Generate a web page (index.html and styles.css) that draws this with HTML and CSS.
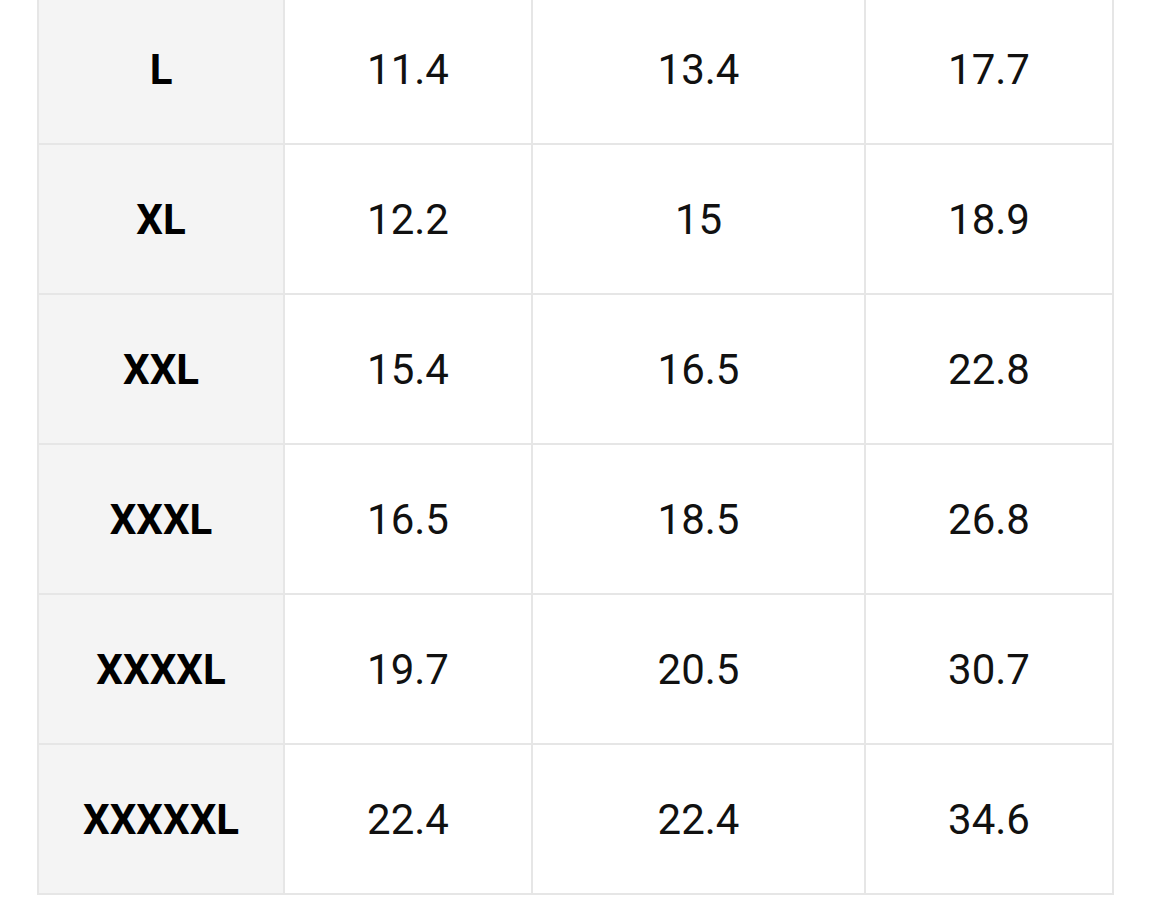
FILE: index.html
```html
<!DOCTYPE html>
<html>
<head>
<meta charset="utf-8">
<link rel="stylesheet" href="styles.css">
</head>
<body>
<div class="size-table">
  <div class="cell head">L</div><div class="cell">11.4</div><div class="cell">13.4</div><div class="cell">17.7</div>
  <div class="cell head">XL</div><div class="cell">12.2</div><div class="cell">15</div><div class="cell">18.9</div>
  <div class="cell head">XXL</div><div class="cell">15.4</div><div class="cell">16.5</div><div class="cell">22.8</div>
  <div class="cell head">XXXL</div><div class="cell">16.5</div><div class="cell">18.5</div><div class="cell">26.8</div>
  <div class="cell head">XXXXL</div><div class="cell">19.7</div><div class="cell">20.5</div><div class="cell">30.7</div>
  <div class="cell head">XXXXXL</div><div class="cell">22.4</div><div class="cell">22.4</div><div class="cell">34.6</div>
</div>
</body>
</html>
```
FILE: styles.css
```css
html, body {
  margin: 0;
  padding: 0;
  background: #ffffff;
}
body {
  font-family: Roboto, "Liberation Sans", sans-serif;
  overflow: hidden;
}
.size-table {
  display: grid;
  grid-template-columns: 244px 246px 331px 246px;
  grid-auto-rows: 148px;
  gap: 2px;
  padding: 2px;
  background: #e6e6e6;
  width: max-content;
  margin: -7px 0 0 37px;
}
.cell {
  background: #ffffff;
  display: flex;
  align-items: center;
  justify-content: center;
  font-size: 42px;
  color: #111111;
}
.cell.head {
  background: #f4f4f4;
  font-weight: 700;
  color: #000000;
}
```
